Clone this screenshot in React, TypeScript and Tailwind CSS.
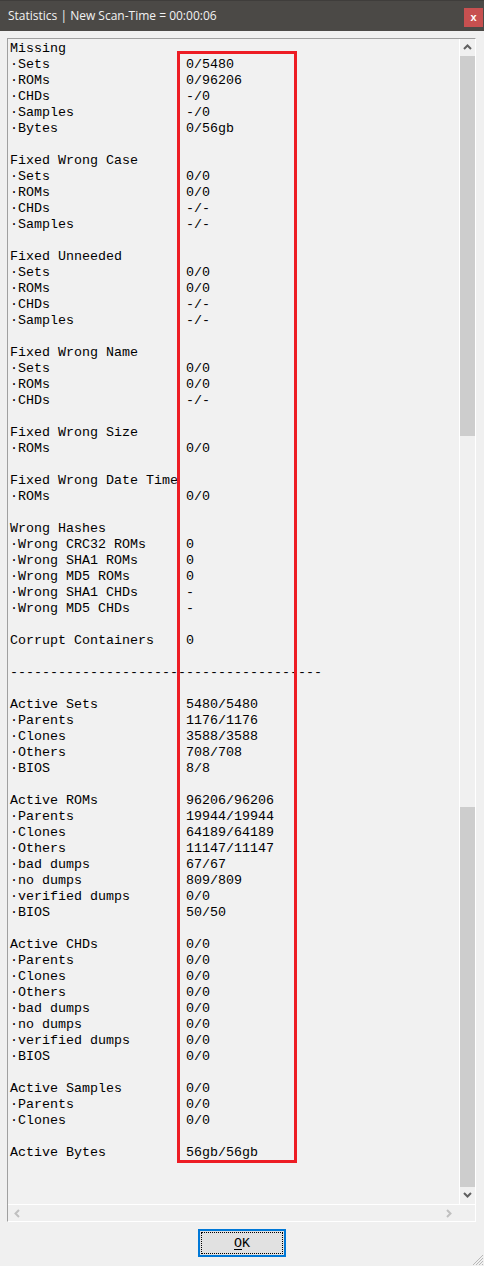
import React from "react";

type Line = [string, string?];

const lines: Line[] = [
  ["Missing"],
  ["·Sets", "0/5480"],
  ["·ROMs", "0/96206"],
  ["·CHDs", "-/0"],
  ["·Samples", "-/0"],
  ["·Bytes", "0/56gb"],
  [""],
  ["Fixed Wrong Case"],
  ["·Sets", "0/0"],
  ["·ROMs", "0/0"],
  ["·CHDs", "-/-"],
  ["·Samples", "-/-"],
  [""],
  ["Fixed Unneeded"],
  ["·Sets", "0/0"],
  ["·ROMs", "0/0"],
  ["·CHDs", "-/-"],
  ["·Samples", "-/-"],
  [""],
  ["Fixed Wrong Name"],
  ["·Sets", "0/0"],
  ["·ROMs", "0/0"],
  ["·CHDs", "-/-"],
  [""],
  ["Fixed Wrong Size"],
  ["·ROMs", "0/0"],
  [""],
  ["Fixed Wrong Date Time"],
  ["·ROMs", "0/0"],
  [""],
  ["Wrong Hashes"],
  ["·Wrong CRC32 ROMs", "0"],
  ["·Wrong SHA1 ROMs", "0"],
  ["·Wrong MD5 ROMs", "0"],
  ["·Wrong SHA1 CHDs", "-"],
  ["·Wrong MD5 CHDs", "-"],
  [""],
  ["Corrupt Containers", "0"],
  [""],
  ["---------------------------------------"],
  [""],
  ["Active Sets", "5480/5480"],
  ["·Parents", "1176/1176"],
  ["·Clones", "3588/3588"],
  ["·Others", "708/708"],
  ["·BIOS", "8/8"],
  [""],
  ["Active ROMs", "96206/96206"],
  ["·Parents", "19944/19944"],
  ["·Clones", "64189/64189"],
  ["·Others", "11147/11147"],
  ["·bad dumps", "67/67"],
  ["·no dumps", "809/809"],
  ["·verified dumps", "0/0"],
  ["·BIOS", "50/50"],
  [""],
  ["Active CHDs", "0/0"],
  ["·Parents", "0/0"],
  ["·Clones", "0/0"],
  ["·Others", "0/0"],
  ["·bad dumps", "0/0"],
  ["·no dumps", "0/0"],
  ["·verified dumps", "0/0"],
  ["·BIOS", "0/0"],
  [""],
  ["Active Samples", "0/0"],
  ["·Parents", "0/0"],
  ["·Clones", "0/0"],
  [""],
  ["Active Bytes", "56gb/56gb"],
];

function Chevron({ dir, color }: { dir: "up" | "down" | "left" | "right"; color: string }) {
  const paths: Record<string, string> = {
    up: "M1 6 L4.5 2.5 L8 6",
    down: "M1 2 L4.5 5.5 L8 2",
    left: "M6 1 L2.5 4.5 L6 8",
    right: "M2 1 L5.5 4.5 L2 8",
  };
  return (
    <svg width="9" height="9" viewBox="0 0 9 9">
      <path d={paths[dir]} fill="none" stroke={color} strokeWidth="2" />
    </svg>
  );
}

export default function App() {
  return (
    <div className="relative w-[484px] h-[1266px] bg-[#f0f0f0] flex flex-col overflow-hidden">
      {/* Title bar */}
      <div className="h-[31px] bg-[#4b4946] border-t border-[#3f3d3b] flex justify-between shrink-0">
        <div className="pl-[8px] pt-[7px] text-[12px] leading-[16px] text-[#f2f2f2] font-['Open_Sans',sans-serif]">
          Statistics | New Scan-Time = 00:00:06
        </div>
        <div className="mt-[7px] mr-[1px] w-[19px] h-[19px] bg-[#c75050] flex items-center justify-center">
          <span className="text-white text-[11px] font-bold leading-none font-['Liberation_Sans',sans-serif] -mt-[1px]">x</span>
        </div>
      </div>

      {/* Body */}
      <div className="pl-[7px] pt-[7px]">
        <div className="w-[469px] h-[1184px] border-l border-t border-[#a0a0a0] border-r border-b border-r-white border-b-white flex flex-col">
          <div className="flex h-[1166px] border-b border-white">
            <div className="w-[451px] h-full overflow-hidden bg-[#f1f1f1] pl-[2px] pt-[2px] font-['Liberation_Mono','Courier_New',monospace] text-[13.33px] leading-[16px] text-black">
              {lines.map(([label, value], i) => (
                <div key={i} className="flex h-[16px] whitespace-pre">
                  <span className="w-[176px] shrink-0">{label}</span>
                  {value !== undefined && <span>{value}</span>}
                </div>
              ))}
            </div>
            {/* vertical scrollbar */}
            <div className="w-[16px] h-full border-l border-white flex flex-col bg-[#f0f0f0]">
              <div className="h-[17px] flex items-center justify-center">
                <Chevron dir="up" color="#606060" />
              </div>
              <div className="h-[380px] bg-[#cdcdcd]" />
              <div className="h-[371px]" />
              <div className="h-[380px] bg-[#cdcdcd]" />
              <div className="flex-1 flex items-center justify-center">
                <Chevron dir="down" color="#606060" />
              </div>
            </div>
          </div>
          {/* horizontal scrollbar */}
          <div className="h-[16px] flex items-center justify-between pl-[5px] pr-[21px] bg-[#f0f0f0]">
            <Chevron dir="left" color="#c0c0c0" />
            <Chevron dir="right" color="#c0c0c0" />
          </div>
        </div>
      </div>

      {/* OK button */}
      <div className="flex pl-[198px] pt-[7px]">
        <div className="w-[88px] h-[28px] border-2 border-[#0078d7] bg-[#e1e1e1] p-[1px]">
          <div className="w-full h-full border border-dotted border-black flex items-center justify-center pt-[2px] font-['Liberation_Mono','Courier_New',monospace] text-[13.33px] text-black">
            <span className="underline underline-offset-2">O</span>K
          </div>
        </div>
      </div>

      {/* resize grip */}
      <svg className="absolute right-0 bottom-0" width="11" height="11" viewBox="0 0 11 11">
        <path d="M10 3 L3 10 M10 6 L6 10 M10 9 L9 10 M10 0 L0 10" stroke="#b8b8b8" strokeWidth="1" />
      </svg>

      {/* red highlight overlay */}
      <div className="absolute left-[177px] top-[51px] w-[120px] h-[1112px] border-[3px] border-[#ed1c24] pointer-events-none" />
    </div>
  );
}
